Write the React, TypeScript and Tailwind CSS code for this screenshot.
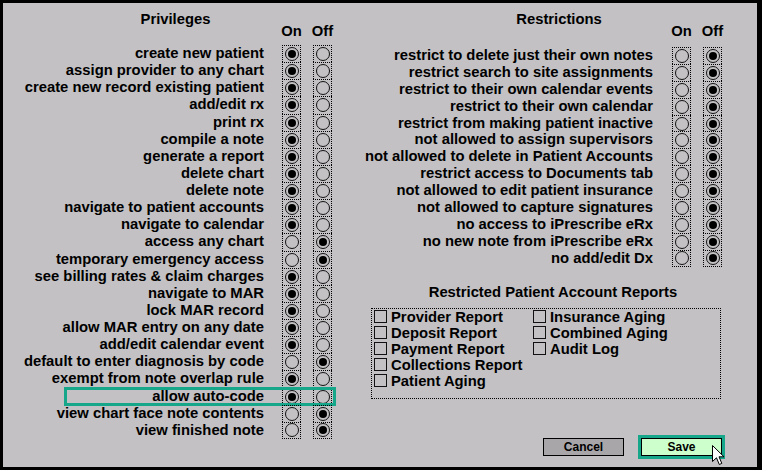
import React from "react";
import clsx from "clsx";

// privileges: label + on/off state
const privileges: [string, boolean][] = [
  ["create new patient", true],
  ["assign provider to any chart", true],
  ["create new record existing patient", true],
  ["add/edit rx", true],
  ["print rx", true],
  ["compile a note", true],
  ["generate a report", true],
  ["delete chart", true],
  ["delete note", true],
  ["navigate to patient accounts", true],
  ["navigate to calendar", true],
  ["access any chart", false],
  ["temporary emergency access", false],
  ["see billing rates & claim charges", true],
  ["navigate to MAR", true],
  ["lock MAR record", true],
  ["allow MAR entry on any date", true],
  ["add/edit calendar event", true],
  ["default to enter diagnosis by code", false],
  ["exempt from note overlap rule", true],
  ["allow auto-code", true],
  ["view chart face note contents", false],
  ["view finished note", false],
];

const restrictions: string[] = [
  "restrict to delete just their own notes",
  "restrict search to site assignments",
  "restrict to their own calendar events",
  "restrict to their own calendar",
  "restrict from making patient inactive",
  "not allowed to assign supervisors",
  "not allowed to delete in Patient Accounts",
  "restrict access to Documents tab",
  "not allowed to edit patient insurance",
  "not allowed to capture signatures",
  "no access to iPrescribe eRx",
  "no new note from iPrescribe eRx",
  "no add/edit Dx",
];

const reportsLeft = ["Provider Report", "Deposit Report", "Payment Report", "Collections Report", "Patient Aging"];
const reportsRight = ["Insurance Aging", "Combined Aging", "Audit Log"];

const Radio = ({ on }: { on: boolean }) => (
  <div className="w-[14px] h-[14px] rounded-full border-[1.5px] border-[#111] flex items-center justify-center">
    {on && <div className="w-[8px] h-[8px] rounded-full bg-black" />}
  </div>
);

const Cell = ({ on, last }: { on: boolean; last: boolean }) => (
  <div
    className={clsx(
      "w-[19px] h-full flex items-center justify-center border-x border-t border-dotted border-black",
      last && "border-b"
    )}
  >
    <Radio on={on} />
  </div>
);

const Checkbox = ({ label }: { label: string }) => (
  <div className="h-[16px] flex items-center gap-[4px] whitespace-nowrap">
    <div className="w-[13px] h-[13px] border border-[#111]" />
    <span className="leading-[16px]">{label}</span>
  </div>
);

export default function App() {
  return (
    <div className="w-[762px] h-[470px] bg-black pt-[3px] pl-[3px] pr-[5px] pb-[3px] font-['Liberation_Sans',Arial,sans-serif] font-bold text-black text-[14.8px]">
      <div className="relative flex h-full bg-[#c3c1c3]">
        {/* Privileges */}
        <div className="w-[345px] flex flex-col">
          <div className="mt-[10px] h-[12px] leading-[12px] text-center">Privileges</div>
          <div className="h-[12px] leading-[12px] flex">
            <div className="w-[261px]" />
            <div className="ml-[18px] w-[19px] flex justify-center whitespace-nowrap">On</div>
            <div className="ml-[12px] w-[19px] flex justify-center whitespace-nowrap">Off</div>
          </div>
          <div className="mt-[8px]">
            {privileges.map(([label, on], i) => (
              <div key={label} className="relative h-[17.14px] flex">
                <div className="w-[261px] text-right leading-[17px] whitespace-nowrap">{label}</div>
                <div className="ml-[18px]">
                  <Cell on={on} last={i === privileges.length - 1} />
                </div>
                <div className="ml-[12px]">
                  <Cell on={!on} last={i === privileges.length - 1} />
                </div>
                {label === "allow auto-code" && (
                  <div className="absolute left-[61px] top-[-1px] w-[272px] h-[19px] border-[3px] border-[#16a68a]" />
                )}
              </div>
            ))}
          </div>
        </div>

        {/* Restrictions */}
        <div className="flex-1 flex flex-col">
          <div className="mt-[10px] h-[12px] leading-[12px] w-[374px] pl-[48px] text-center">Restrictions</div>
          <div className="h-[12px] leading-[12px] flex">
            <div className="w-[305px]" />
            <div className="ml-[19px] w-[19px] flex justify-center whitespace-nowrap">On</div>
            <div className="ml-[12px] w-[19px] flex justify-center whitespace-nowrap">Off</div>
          </div>
          <div className="mt-[10px]">
            {restrictions.map((label, i) => (
              <div key={label} className="h-[16.9px] flex">
                <div className="w-[305px] text-right leading-[17px] whitespace-nowrap">{label}</div>
                <div className="ml-[19px]">
                  <Cell on={false} last={i === restrictions.length - 1} />
                </div>
                <div className="ml-[12px]">
                  <Cell on={true} last={i === restrictions.length - 1} />
                </div>
              </div>
            ))}
          </div>

          {/* Restricted Patient Account Reports */}
          <div className="mt-[17px] ml-[23px] w-[364px] h-[17px] leading-[17px] text-center">
            Restricted Patient Account Reports
          </div>
          <div className="mt-[7px] ml-[23px] w-[350px] h-[91px] border border-dotted border-black pl-[2px] flex">
            <div className="w-[159px] flex flex-col">
              {reportsLeft.map((r) => (
                <Checkbox key={r} label={r} />
              ))}
            </div>
            <div className="flex flex-col">
              {reportsRight.map((r) => (
                <Checkbox key={r} label={r} />
              ))}
            </div>
          </div>

          {/* Buttons */}
          <div className="mt-auto mb-[8px] pr-[32px] flex items-center justify-end gap-[14px] text-[12px]">
            <div className="w-[81px] h-[18px] border border-black bg-[#a8a6a8] flex items-center justify-center">
              Cancel
            </div>
            <div className="border-[3px] border-[#16a68a]">
              <div className="w-[81px] h-[18px] border border-black bg-[#ccffcc] flex items-center justify-center">
                Save
              </div>
            </div>
          </div>
        </div>

        {/* mouse pointer */}
        <svg className="absolute left-[709px] top-[442px]" width="13" height="21" viewBox="0 0 13 21">
          <path
            d="M0.5 0.5 L0.5 16.5 L4.5 12.8 L7.3 19.5 L9.8 18.4 L7 11.8 L12 11.8 Z"
            fill="white"
            stroke="black"
            strokeWidth="1"
            strokeLinejoin="miter"
          />
        </svg>
      </div>
    </div>
  );
}
